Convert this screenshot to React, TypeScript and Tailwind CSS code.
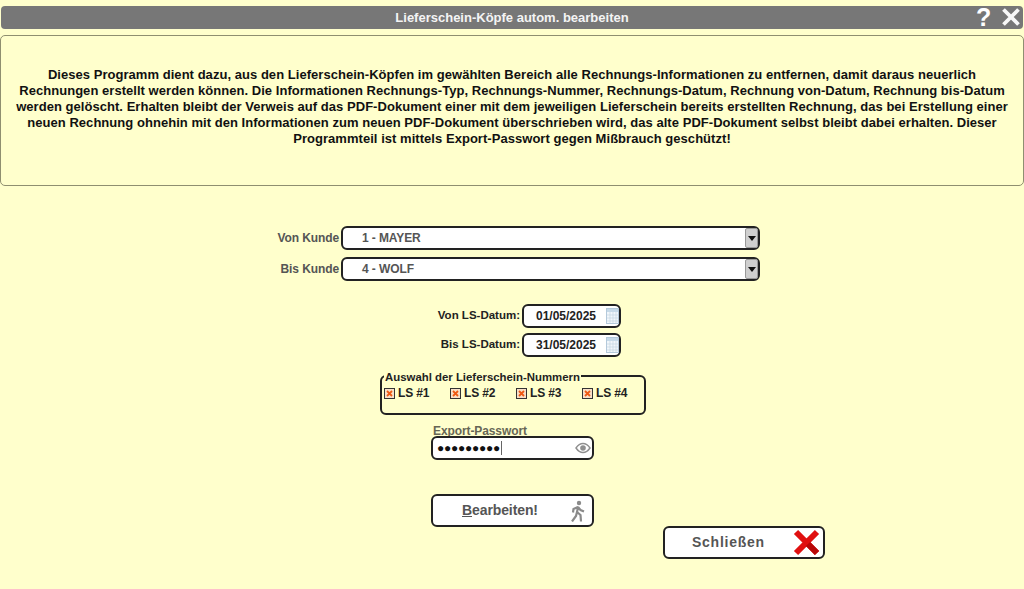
import React from "react";

const F = "font-['Liberation_Sans',Arial,sans-serif]";

function Sel({ label, value }: { label: string; value: string }) {
  return (
    <div className="flex items-center h-[24px]">
      <span className="w-[339px] text-right text-[12px] tracking-[-0.1px] font-bold text-[#555555]">{label}</span>
      <div className="ml-[2px] w-[419px] h-[24px] bg-white border-2 border-[#222222] rounded-[6px] flex items-center justify-between">
        <span className="pl-[19px] text-[12px] tracking-[-0.1px] font-bold text-[#555555]">{value}</span>
        <span className="w-[13px] h-[20px] bg-[#cfcfcf] border border-[#999999] rounded-[2px] flex items-center justify-center">
          <svg width="8" height="5" viewBox="0 0 8 5"><path d="M0 0h8L4 5z" fill="#111" /></svg>
        </span>
      </div>
    </div>
  );
}

function Cal() {
  return (
    <svg width="13" height="16" viewBox="0 0 13 16" className="shrink-0">
      <rect x="0.5" y="0.5" width="12" height="15" fill="#f1f6fb" stroke="#b4c9db" />
      <rect x="1" y="1" width="11" height="3" fill="#c6d9e8" />
      <path d="M1 7h11M1 10h11M1 13h11M4 4v11M7 4v11M10 4v11" stroke="#c4d5e3" strokeWidth="0.7" />
    </svg>
  );
}

function DateRow({ label, value }: { label: string; value: string }) {
  return (
    <div className="flex items-center h-[24px] pl-[300px]">
      <span className="w-[220px] text-right text-[11.5px] font-bold text-[#222222]">{label}</span>
      <div className="ml-[2px] w-[99px] h-[24px] bg-white border-2 border-[#222222] rounded-[6px] flex items-center">
        <span className="w-[82px] text-center pl-[3px] text-[12px] font-bold text-[#222222]">{value}</span>
        <span className="ml-[1px] flex"><Cal /></span>
      </div>
    </div>
  );
}

function Check({ label, w }: { label: string; w: string }) {
  return (
    <div className={`flex items-center ${w}`}>
      <span className="w-[11px] h-[11px] bg-[#f8e0c8] border border-[#333333] flex items-center justify-center">
        <svg width="7" height="7" viewBox="0 0 7 7"><path d="M1 1l5 5M6 1L1 6" stroke="#ee5a14" strokeWidth="1.8" /></svg>
      </span>
      <span className="ml-[3px] text-[12px] tracking-[-0.15px] font-bold text-[#222222]">{label}</span>
    </div>
  );
}

export default function App() {
  return (
    <div className={`${F} w-[1024px] h-[589px] overflow-hidden bg-[#ffffcc] flex flex-col`}>
      <div className="mt-[6px] mx-[1px] h-[23px] bg-[#777777] rounded-[4px] flex items-center relative shrink-0">
        <span className="w-full text-center text-[13px] font-bold text-[#f4f4f4]">Lieferschein-Köpfe autom. bearbeiten</span>
        <span className="absolute left-[975px] top-[-3px] text-[25px] leading-[28px] font-bold text-white">?</span>
        <svg width="20" height="18" viewBox="0 0 20 18" className="absolute left-[1000px] top-[2px]">
          <path d="M2.5 1.5L17.5 16.5M17.5 1.5L2.5 16.5" stroke="#f8f8f8" strokeWidth="3.8" />
        </svg>
      </div>

      <div className="mt-[6px] h-[151px] shrink-0 border border-[#8f8f70] rounded-[5px] pt-[31px] px-[8px] text-center text-[13px] tracking-[0.04px] leading-[16px] font-bold text-[#111111]">
        Dieses Programm dient dazu, aus den Lieferschein-Köpfen im gewählten Bereich alle Rechnungs-Informationen zu entfernen, damit daraus neuerlich
        <br />
        Rechnungen erstellt werden können. Die Informationen Rechnungs-Typ, Rechnungs-Nummer, Rechnungs-Datum, Rechnung von-Datum, Rechnung bis-Datum
        <br />
        werden gelöscht. Erhalten bleibt der Verweis auf das PDF-Dokument einer mit dem jeweiligen Lieferschein bereits erstellten Rechnung, das bei Erstellung einer
        <br />
        neuen Rechnung ohnehin mit den Informationen zum neuen PDF-Dokument überschrieben wird, das alte PDF-Dokument selbst bleibt dabei erhalten. Dieser
        <br />
        Programmteil ist mittels Export-Passwort gegen Mißbrauch geschützt!
      </div>

      <div className="mt-[40px] flex flex-col gap-[7px]">
        <Sel label="Von Kunde" value="1 - MAYER" />
        <Sel label="Bis Kunde" value="4 - WOLF" />
      </div>

      <div className="mt-[23px] flex flex-col gap-[5px]">
        <DateRow label="Von LS-Datum:" value="01/05/2025" />
        <DateRow label="Bis LS-Datum:" value="31/05/2025" />
      </div>

      <fieldset className="mt-[11px] ml-[380px] w-[266px] h-[47px] border-2 border-[#222222] rounded-[6px] pl-[1px] pr-0 pb-0 pt-0">
        <legend className="ml-[1px] px-[1px] pt-[3px] text-[11.4px] leading-[13px] font-bold text-[#222222]">Auswahl der Lieferschein-Nummern</legend>
        <div className="flex ml-[1px]">
          <Check label="LS #1" w="w-[66px]" />
          <Check label="LS #2" w="w-[66px]" />
          <Check label="LS #3" w="w-[66px]" />
          <Check label="LS #4" w="w-[60px]" />
        </div>
      </fieldset>

      <div className="mt-[11px] ml-[431px] w-[163px] flex flex-col">
        <span className="pl-[2px] h-[10px] text-[12px] tracking-[-0.1px] leading-[10px] font-bold text-[#666655]">Export-Passwort</span>
        <div className="h-[24px] bg-white border-2 border-[#222222] rounded-[6px] flex items-center pl-[4px] pr-[1px]">
          <span className="text-[#111111] text-[12px] tracking-[-0.25px] leading-none">●●●●●●●●●</span>
          <span className="w-[1px] h-[14px] ml-[1px] bg-[#666666]" />
          <svg width="16" height="12" viewBox="0 0 16 12" className="ml-auto">
            <path d="M1 6c2-3 4.500-4.500 7-4.500S13 3 15 6c-2 3-4.500 4.500-7 4.500S3 9 1 6z" fill="none" stroke="#8f8f8f" strokeWidth="1.400" />
            <circle cx="8" cy="6" r="2.800" fill="#8f8f8f" />
          </svg>
        </div>
      </div>

      <div className="mt-[34px] ml-[431px] w-[163px] h-[33px] bg-white border-2 border-[#222222] rounded-[6px] flex items-center">
        <span className="ml-[29px] text-[14px] tracking-[-0.1px] font-bold text-[#555555]"><span className="underline">B</span>earbeiten!</span>
        <svg width="16" height="22" viewBox="0 0 16 22" className="ml-auto mr-[6px]">
          <circle cx="9" cy="3" r="2.200" fill="#8a8a8a" />
          <path d="M8 6.500L7 12.500M7 12l3.500 3 .5 6.500M7 12l-1 4-4 5.500M8 7L3.500 9 3 12.500M8 7l2.500 3 3.500 1.500" fill="none" stroke="#8a8a8a" strokeWidth="2.200" />
        </svg>
      </div>

      <div className="-mt-px ml-[663px] w-[162px] h-[33px] bg-white border-2 border-[#222222] rounded-[6px] flex items-center">
        <span className="ml-[27px] text-[14px] font-bold text-[#555555] tracking-[0.75px]">Schließen</span>
        <svg width="27" height="27" viewBox="0 0 27 27" className="ml-auto mr-[3px]">
          <path d="M3 3L24 24M24 3L3 24" stroke="#e01010" strokeWidth="6" />
          <path d="M15 15L24 24" stroke="#b80808" strokeWidth="6" />
        </svg>
      </div>
    </div>
  );
}
